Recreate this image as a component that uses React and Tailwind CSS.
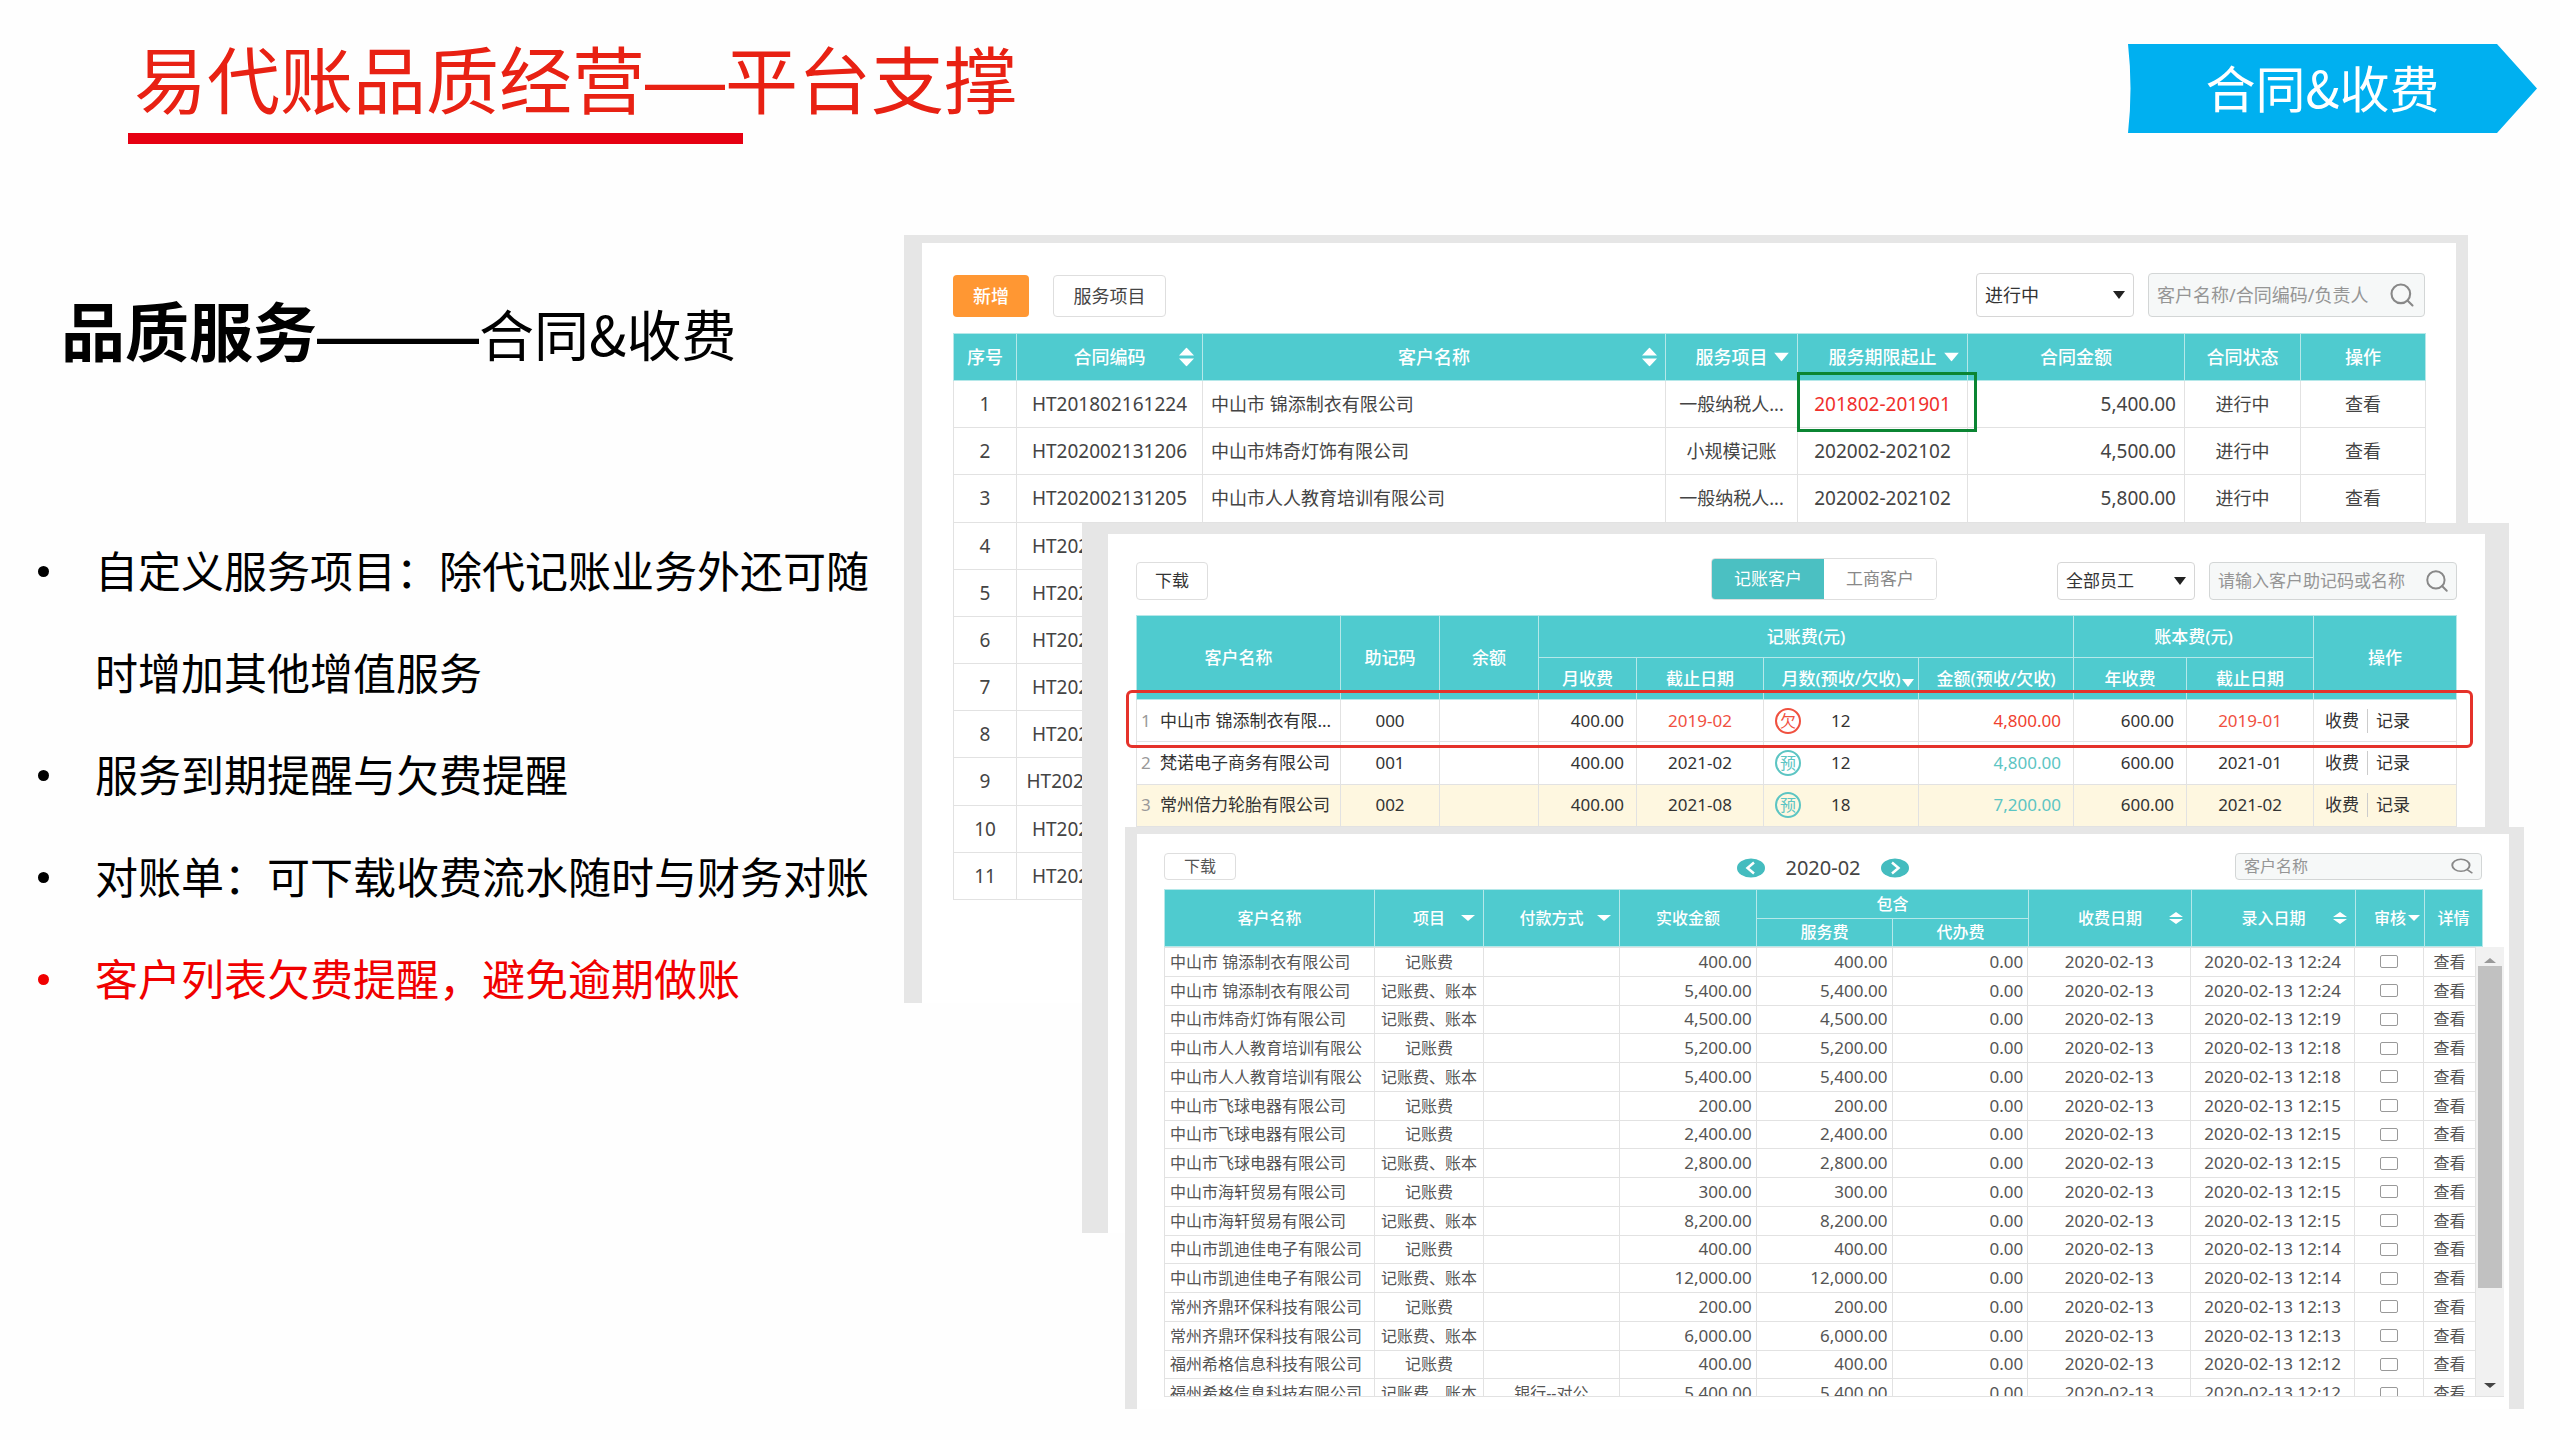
import React, { useState } from "react";
import { Search } from "lucide-react";

const contracts = [
  { code: "HT201802161224", name: "中山市 锦添制衣有限公司", service: "一般纳税人...", period: "201802-201901", amount: "5,400.00", overdue: true },
  { code: "HT202002131206", name: "中山市炜奇灯饰有限公司", service: "小规模记账", period: "202002-202102", amount: "4,500.00" },
  { code: "HT202002131205", name: "中山市人人教育培训有限公司", service: "一般纳税人...", period: "202002-202102", amount: "5,800.00" },
  { code: "HT202002131204" },
  { code: "HT202002131203" },
  { code: "HT202002131202" },
  { code: "HT202002131201" },
  { code: "HT202002131200" },
  { code: "HT2020021311591" },
  { code: "HT202002131158" },
  { code: "HT202002131157" },
];

const customers = [
  { name: "中山市 锦添制衣有限...", code: "000", end: "2019-02", tag: "欠", months: "12", total: "4,800.00", bookEnd: "2019-01" },
  { name: "梵诺电子商务有限公司", code: "001", end: "2021-02", tag: "预", months: "12", total: "4,800.00", bookEnd: "2021-01" },
  { name: "常州倍力轮胎有限公司", code: "002", end: "2021-08", tag: "预", months: "18", total: "7,200.00", bookEnd: "2021-02" },
];

const payments = [
  ["中山市 锦添制衣有限公司", "记账费", "", "400.00", "12:24"],
  ["中山市 锦添制衣有限公司", "记账费、账本", "", "5,400.00", "12:24"],
  ["中山市炜奇灯饰有限公司", "记账费、账本", "", "4,500.00", "12:19"],
  ["中山市人人教育培训有限公", "记账费", "", "5,200.00", "12:18"],
  ["中山市人人教育培训有限公", "记账费、账本", "", "5,400.00", "12:18"],
  ["中山市飞球电器有限公司", "记账费", "", "200.00", "12:15"],
  ["中山市飞球电器有限公司", "记账费", "", "2,400.00", "12:15"],
  ["中山市飞球电器有限公司", "记账费、账本", "", "2,800.00", "12:15"],
  ["中山市海轩贸易有限公司", "记账费", "", "300.00", "12:15"],
  ["中山市海轩贸易有限公司", "记账费、账本", "", "8,200.00", "12:15"],
  ["中山市凯迪佳电子有限公司", "记账费", "", "400.00", "12:14"],
  ["中山市凯迪佳电子有限公司", "记账费、账本", "", "12,000.00", "12:14"],
  ["常州齐鼎环保科技有限公司", "记账费", "", "200.00", "12:13"],
  ["常州齐鼎环保科技有限公司", "记账费、账本", "", "6,000.00", "12:13"],
  ["福州希格信息科技有限公司", "记账费", "", "400.00", "12:12"],
  ["福州希格信息科技有限公司", "记账费、账本", "银行--对公", "5,400.00", "12:12"],
];

const points = [
  { text: "自定义服务项目：除代记账业务外还可随时增加其他增值服务" },
  { text: "服务到期提醒与欠费提醒" },
  { text: "对账单：可下载收费流水随时与财务对账" },
  { text: "客户列表欠费提醒，避免逾期做账", red: true },
];

const Triangle = ({ className = "" }) => (
  <svg viewBox="0 0 14 10" preserveAspectRatio="none" className={className} fill="currentColor" aria-hidden="true">
    <path d="M0 0H14L7 10Z" />
  </svg>
);

const SortArrows = ({ className = "" }) => (
  <svg viewBox="0 0 14 20" preserveAspectRatio="none" className={className} fill="currentColor" aria-hidden="true">
    <path d="M0 8.5L7 0L14 8.5Z M0 11.5H14L7 20Z" />
  </svg>
);

const Th = ({ children, icon, ...rest }) => (
  <th {...rest} className="relative border border-[#b5e8e9] p-0 font-medium whitespace-nowrap">
    {children}
    {icon}
  </th>
);

const SearchBox = ({ placeholder, className, iconClass }) => (
  <label className={`flex items-center border border-[#d3d6d6] rounded bg-[#f6f8f8] ${className}`}>
    <input
      type="text"
      aria-label={placeholder}
      placeholder={placeholder}
      className="flex-1 min-w-0 bg-transparent outline-none placeholder:text-[#959595]"
    />
    <Search className={iconClass} strokeWidth={1.8} preserveAspectRatio="none" />
  </label>
);

const SelectBox = ({ label, value, className }) => (
  <div className={`relative border border-[#d6d6d6] rounded bg-white ${className}`}>
    <select aria-label={label} className="w-full h-full appearance-none bg-transparent outline-none text-[#333]">
      <option>{value}</option>
    </select>
    <Triangle className="absolute right-2 top-1/2 -translate-y-1/2 w-3 h-2 text-[#222] pointer-events-none" />
  </div>
);

const Cols = ({ widths }) => (
  <colgroup>
    {widths.map((w, i) => (
      <col key={i} style={{ width: w }} />
    ))}
  </colgroup>
);

function ContractPanel() {
  const cell = "border border-[#e2e2e2] p-0 whitespace-nowrap";
  const sort = <SortArrows className="absolute right-2 top-1/2 -translate-y-1/2 w-[15px] h-[19px]" />;
  const down = <Triangle className="absolute right-2 top-1/2 -translate-y-1/2 w-[15px] h-[9px]" />;
  return (
    <section className="col-start-1 row-start-1 self-start mr-[56px] bg-white border-[#e6e6e6] border-t-8 border-l-[18px] border-r-[12px] px-[31px] pt-[30px] pb-[103px] text-lg leading-6 text-[#444]">
      <div className="flex items-end">
        <button className="w-[76px] h-[42px] rounded bg-[#ff9733] text-white font-medium">新增</button>
        <button className="ml-6 w-[113px] h-[42px] rounded border border-[#dedede] bg-white">服务项目</button>
        <SelectBox label="合同状态" value="进行中" className="ml-auto w-[158px] h-[44px] pl-2" />
        <SearchBox placeholder="客户名称/合同编码/负责人" className="ml-[14px] w-[277px] h-[44px] pl-2 pr-2" iconClass="w-7 h-7 text-[#888]" />
      </div>
      <table className="mt-4 w-full h-[567px] table-fixed border-collapse text-center">
        <Cols widths={[63, 186, 463, 132, 170, 217, 116, 125]} />
        <thead className="bg-[#4fcbcf] text-white">
          <tr className="h-[47px]">
            <Th>序号</Th>
            <Th icon={sort}>合同编码</Th>
            <Th icon={sort}>客户名称</Th>
            <Th icon={down}>服务项目</Th>
            <Th icon={down}>服务期限起止</Th>
            <Th>合同金额</Th>
            <Th>合同状态</Th>
            <Th>操作</Th>
          </tr>
        </thead>
        <tbody>
          {contracts.map((row, i) => (
            <tr key={row.code}>
              <td className={`${cell} text-[19px]`}>{i + 1}</td>
              <td className={`${cell} text-[19px]`}>{row.code}</td>
              <td className={`${cell} text-left pl-2`}>{row.name}</td>
              <td className={cell}>{row.service}</td>
              <td className={`${cell} relative text-[19px]`}>
                <span className={row.overdue ? "text-[#f0302c]" : ""}>{row.period}</span>
                {row.overdue && (
                  <span className="absolute -left-px -right-[10px] -top-[9px] -bottom-[5px] border-[3px] border-[#0b8533]" />
                )}
              </td>
              <td className={`${cell} text-[19px] text-right pr-2`}>{row.amount}</td>
              <td className={cell}>{row.name && "进行中"}</td>
              <td className={cell}>{row.name && <button>查看</button>}</td>
            </tr>
          ))}
        </tbody>
      </table>
    </section>
  );
}

function CustomerPanel() {
  const [tab, setTab] = useState("记账客户");
  const cell = "border border-[#e2e2e2] p-0 whitespace-nowrap";
  return (
    <section className="col-start-1 row-start-1 self-start mt-[288px] ml-[178px] mr-[15px] min-h-[710px] bg-white border-[#e6e6e6] border-t-[11px] border-l-[26px] border-r-[24px] px-7 pt-6 text-[17px] leading-6 text-[#333]">
      <div className="flex items-end">
        <button className="w-[72px] h-[38px] rounded border border-[#dedede]">下载</button>
        <div className="ml-auto mr-[120px] flex rounded overflow-hidden border border-[#dedede]">
          {["记账客户", "工商客户"].map((t) => (
            <button
              key={t}
              onClick={() => setTab(t)}
              className={`w-[112px] h-10 ${tab === t ? "bg-[#4bc0c2] text-white" : "bg-white text-[#888]"}`}
            >
              {t}
            </button>
          ))}
        </div>
        <SelectBox label="员工" value="全部员工" className="w-[138px] h-[38px] pl-2" />
        <SearchBox placeholder="请输入客户助记码或名称" className="ml-[14px] w-[248px] h-[38px] pl-2 pr-1.5" iconClass="w-[26px] h-[26px] text-[#888]" />
      </div>
      <div className="relative mt-[15px]">
        <table className="w-full h-[212px] table-fixed border-collapse text-center">
          <Cols widths={[204, 99, 99, 98, 127, 155, 155, 113, 127, 143]} />
          <thead className="bg-[#4fcbcf] text-white">
            <tr className="h-[42px]">
              <Th rowSpan={2}>客户名称</Th>
              <Th rowSpan={2}>助记码</Th>
              <Th rowSpan={2}>余额</Th>
              <Th colSpan={4}>记账费(元)</Th>
              <Th colSpan={2}>账本费(元)</Th>
              <Th rowSpan={2}>操作</Th>
            </tr>
            <tr className="h-[42px]">
              <Th>月收费</Th>
              <Th>截止日期</Th>
              <Th icon={<Triangle className="absolute right-1 bottom-3 w-3 h-2" />}>月数(预收/欠收)</Th>
              <Th>金额(预收/欠收)</Th>
              <Th>年收费</Th>
              <Th>截止日期</Th>
            </tr>
          </thead>
          <tbody>
            {customers.map((row, i) => {
              const owed = row.tag === "欠";
              return (
                <tr key={row.code} className={i === 2 ? "bg-[#fef7e0]" : ""}>
                  <td className={`${cell} text-left pl-1`}>
                    <span className="inline-block w-[19px] text-[#999]">{i + 1}</span>
                    {row.name}
                  </td>
                  <td className={cell}>{row.code}</td>
                  <td className={cell}></td>
                  <td className={`${cell} text-right pr-3`}>400.00</td>
                  <td className={`${cell} ${owed ? "text-[#f0503f]" : ""}`}>{row.end}</td>
                  <td className={cell}>
                    <span className="flex items-center pl-[11px]">
                      <span
                        className={`w-[26px] h-[26px] rounded-full border-2 flex items-center justify-center text-base leading-none ${
                          owed ? "border-[#f0503f] text-[#f0503f]" : "border-[#5cc5c3] text-[#5cc5c3]"
                        }`}
                      >
                        {row.tag}
                      </span>
                      <span className="ml-[30px]">{row.months}</span>
                    </span>
                  </td>
                  <td className={`${cell} text-right pr-3 ${owed ? "text-[#f0402f]" : "text-[#5cc5c3]"}`}>{row.total}</td>
                  <td className={`${cell} text-right pr-3`}>600.00</td>
                  <td className={`${cell} ${owed ? "text-[#f0503f]" : ""}`}>{row.bookEnd}</td>
                  <td className={cell}>
                    <span className="flex items-center pl-[11px]">
                      <button>收费</button>
                      <span className="mx-2 w-px h-6 bg-[#ccc]" />
                      <button>记录</button>
                    </span>
                  </td>
                </tr>
              );
            })}
          </tbody>
        </table>
        {/* highlight round the overdue customer */}
        <div className="absolute -left-[10px] -right-4 top-[75px] h-[58px] border-[3px] border-[#e5322a] rounded-md" />
      </div>
    </section>
  );
}

const MonthButton = ({ label, d }) => (
  <button aria-label={label}>
    <svg viewBox="0 0 28 20" className="block w-7 h-5" fill="none">
      <ellipse cx="14" cy="10" rx="14" ry="9.5" fill="#44bcbf" />
      <path d={d} stroke="#fff" strokeWidth="2.5" />
    </svg>
  </button>
);

function PaymentPanel() {
  const cell = "border border-[#e2e2e2] p-0 whitespace-nowrap";
  const sort = <SortArrows className="absolute right-2 top-1/2 -translate-y-1/2 w-[14px] h-3" />;
  const down = <Triangle className="absolute right-2 top-1/2 -translate-y-1/2 w-[14px] h-1.5" />;
  return (
    <section className="col-start-1 row-start-1 self-start mt-[592px] ml-[221px] bg-white border-[#e6e6e6] border-t-[7px] border-l-[12px] border-r-[15px] px-[27px] pt-[18px] pb-3 text-base leading-5 text-[#555]">
      <div className="grid grid-cols-3 items-center h-[27px]">
        <button className="w-[72px] h-[27px] rounded-sm border border-[#dedede]">下载</button>
        <div className="flex items-center justify-self-center gap-5 pt-1">
          <MonthButton label="上个月" d="M17 4.5L10.5 10L17 15.5" />
          <span className="text-xl leading-6 text-[#444]">2020-02</span>
          <MonthButton label="下个月" d="M11 4.5L17.5 10L11 15.5" />
        </div>
        <SearchBox placeholder="客户名称" className="justify-self-end w-[247px] h-[27px] pl-2 pr-1.5" iconClass="w-[26px] h-[18px] text-[#888]" />
      </div>
      <table className="mt-[10px] w-full h-[58px] table-fixed border-collapse text-center">
        <Cols widths={[210, 109, 136, 137, 136, 136, 163, 164, 69, 58]} />
        <thead className="bg-[#4fcbcf] text-white">
          <tr>
            <Th rowSpan={2}>客户名称</Th>
            <Th rowSpan={2} icon={down}>项目</Th>
            <Th rowSpan={2} icon={down}>付款方式</Th>
            <Th rowSpan={2}>实收金额</Th>
            <Th colSpan={2}>包含</Th>
            <Th rowSpan={2} icon={sort}>收费日期</Th>
            <Th rowSpan={2} icon={sort}>录入日期</Th>
            <Th rowSpan={2} icon={<Triangle className="absolute right-1 top-1/2 -translate-y-1/2 w-3 h-1.5" />}>审核</Th>
            <Th rowSpan={2}>详情</Th>
          </tr>
          <tr>
            <Th>服务费</Th>
            <Th>代办费</Th>
          </tr>
        </thead>
      </table>
      <div className="flex items-start -mr-[22px] h-[450px] overflow-hidden border-b border-[#e2e2e2]">
        <table className="flex-1 h-[461px] table-fixed border-collapse text-center">
          <Cols widths={[210, 109, 136, 137, 136, 136, 163, 164, 69, 52]} />
          <tbody>
            {payments.map(([name, item, method, amount, time], i) => (
              <tr key={i}>
                <td className={`${cell} text-left pl-[5px]`}>{name}</td>
                <td className={cell}>{item}</td>
                <td className={cell}>{method}</td>
                <td className={`${cell} text-[17px] text-right pr-1`}>{amount}</td>
                <td className={`${cell} text-[17px] text-right pr-1`}>{amount}</td>
                <td className={`${cell} text-[17px] text-right pr-1`}>0.00</td>
                <td className={`${cell} text-[17px]`}>2020-02-13</td>
                <td className={`${cell} text-[17px]`}>2020-02-13 {time}</td>
                <td className={cell}>
                  <input
                    type="checkbox"
                    aria-label={`审核 ${name}`}
                    className="block mx-auto appearance-none w-[18px] h-[13px] border border-[#999] rounded-xs bg-white"
                  />
                </td>
                <td className={cell}>
                  <button className="block mx-auto">查看</button>
                </td>
              </tr>
            ))}
          </tbody>
        </table>
        <div className="w-7 h-full bg-[#f1f1f1] flex flex-col items-center">
          <Triangle className="mt-[11px] w-3 h-[5px] rotate-180 text-[#999]" />
          <div className="mt-[3px] w-6 h-[322px] bg-[#c1c1c1]" />
          <Triangle className="mt-auto mb-2 w-3 h-[5px] text-[#444]" />
        </div>
      </div>
    </section>
  );
}

export default function App() {
  return (
    <div
      lang="zh-CN"
      className="min-h-screen bg-[#fefefe] overflow-hidden font-['Noto_Sans','Noto_Sans_CJK_SC',sans-serif]"
    >
      <header className="flex justify-between items-start h-[235px] pr-[23px] pl-32 font-['Noto_Sans_CJK_SC',sans-serif]">
        <div className="pt-[38px]">
          <h1 className="pl-1.5 h-[76px] text-[73px] leading-[76px] text-[#e82113] whitespace-nowrap">
            易代账品质经营<span className="text-[80px] leading-none font-['Liberation_Sans',sans-serif]">—</span>平台支撑
          </h1>
          <div className="mt-[19px] w-[615px] h-[11px] bg-[#e60012]" />
        </div>
        <div className="relative mt-[44px] w-[409px] h-[89px] pr-5 pb-1.5 flex items-center justify-center">
          <svg viewBox="0 0 409 89" className="absolute inset-0 w-full h-full" fill="#00b0f0" aria-hidden="true">
            <path d="M0 0H369L409 44.5L369 89H0Q5 44.5 0 0Z" />
          </svg>
          <span className="relative text-[50px] leading-none text-white">合同&amp;收费</span>
        </div>
      </header>

      <main className="flex items-start">
        <div className="w-[904px] shrink-0 pt-[53px] text-black font-['Noto_Sans_CJK_SC',sans-serif]">
          <h2 className="pl-[61px] h-[82px] leading-[80px] text-[55px] whitespace-nowrap">
            <span className="text-[64px] font-bold">品质服务</span>
            <span className="text-[54px] font-bold font-['Liberation_Sans',sans-serif]">———</span>
            合同&amp;收费
          </h2>
          <ul className="mt-[148px] pl-[38px] text-[43px] leading-[102px]">
            {points.map((p) => (
              <li key={p.text} className={`flex items-start gap-[46px] ${p.red ? "text-[#f00000]" : ""}`}>
                <span className="mt-[48px] w-[11px] h-[11px] shrink-0 rounded-full bg-current" />
                <span>{p.text}</span>
              </li>
            ))}
          </ul>
        </div>

        {/* the three windows share one grid cell, each laid over the one before */}
        <div className="flex-1 min-w-0 mr-9 grid grid-cols-1">
          <ContractPanel />
          <CustomerPanel />
          <PaymentPanel />
        </div>
      </main>
    </div>
  );
}
